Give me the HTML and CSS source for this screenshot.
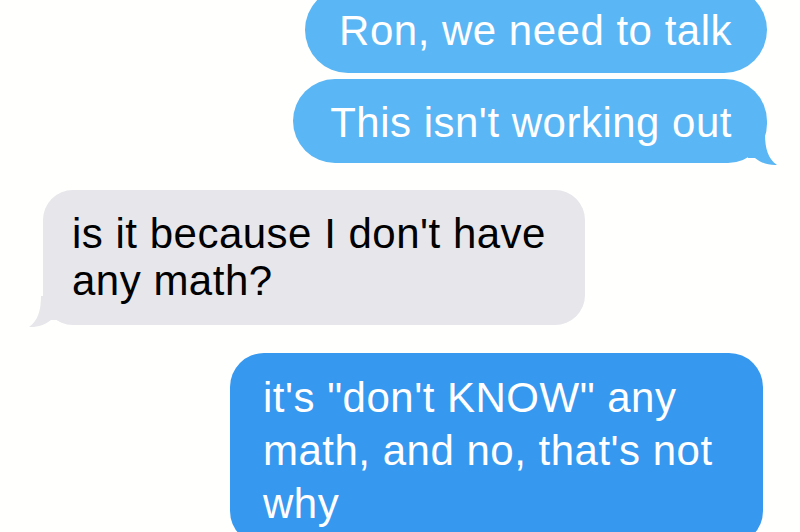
FILE: index.html
```html
<!DOCTYPE html>
<html lang="en">
<head>
    <meta charset="UTF-8">
    <meta name="viewport" content="width=device-width, initial-scale=1.0">
    <title>Messages</title>
    <link rel="stylesheet" href="styles.css">
</head>
<body>
    <div class="thread">
        <!-- sent group -->
        <div class="msg sent first">Ron, we need to talk</div>
        <div class="msg sent last">This isn't working out
            <svg class="tail tail-right" viewBox="0 0 30 32" width="30" height="32">
                <path d="M0 0 H17 C17 14 20 25 29 31 C21 31.5 13 29 7 24 L0 24 Z" fill="#5ab6f4"/>
            </svg>
        </div>

        <!-- received -->
        <div class="msg received">is it because I don't have any math?
            <svg class="tail tail-left" viewBox="0 0 30 32" width="30" height="32">
                <path d="M30 0 H13 C13 14 10 25 1 31 C9 31.5 17 29 23 24 L30 24 Z" fill="#e6e6eb"/>
            </svg>
        </div>

        <!-- sent -->
        <div class="msg sent reply">it's "don't KNOW" any math, and no, that's not why</div>
    </div>
</body>
</html>
```

FILE: styles.css
```css
/* chat thread */
body {
    margin: 0;
    background-color: #fffffd;
    font-family: "Liberation Sans", Arial, sans-serif;
    overflow: hidden;
}

.thread {
    display: flex;
    flex-direction: column;
    align-items: flex-end;
    padding: 0 33px 0 43px;
    margin-top: -13px;
}

.msg {
    position: relative;
    font-size: 42px;
    letter-spacing: 0.5px;
    line-height: 47px;
}

.sent {
    background-color: #5ab6f4;
    color: #ffffff;
    border-radius: 43px;
    padding: 20px 35px 19px 34px;
}

.sent.last {
    margin-top: 6px;
    padding: 20px 35px 17px 37px;
    border-bottom-right-radius: 40px;
}

.received {
    align-self: flex-start;
    box-sizing: border-box;
    width: 542px;
    margin-top: 27px;
    padding: 20px 30px 21px 29px;
    background-color: #e6e6eb;
    color: #000000;
    border-radius: 30px;
}

.sent.reply {
    box-sizing: border-box;
    width: 533px;
    margin-top: 28px;
    margin-right: 4px;
    padding: 18px 33px 15px 33px;
    line-height: 53px;
    border-radius: 34px;
    background-color: #3698ef;
}

.tail {
    position: absolute;
    bottom: -3px;
}

.tail-right {
    right: -11px;
}

.tail-left {
    left: -15px;
}
```
